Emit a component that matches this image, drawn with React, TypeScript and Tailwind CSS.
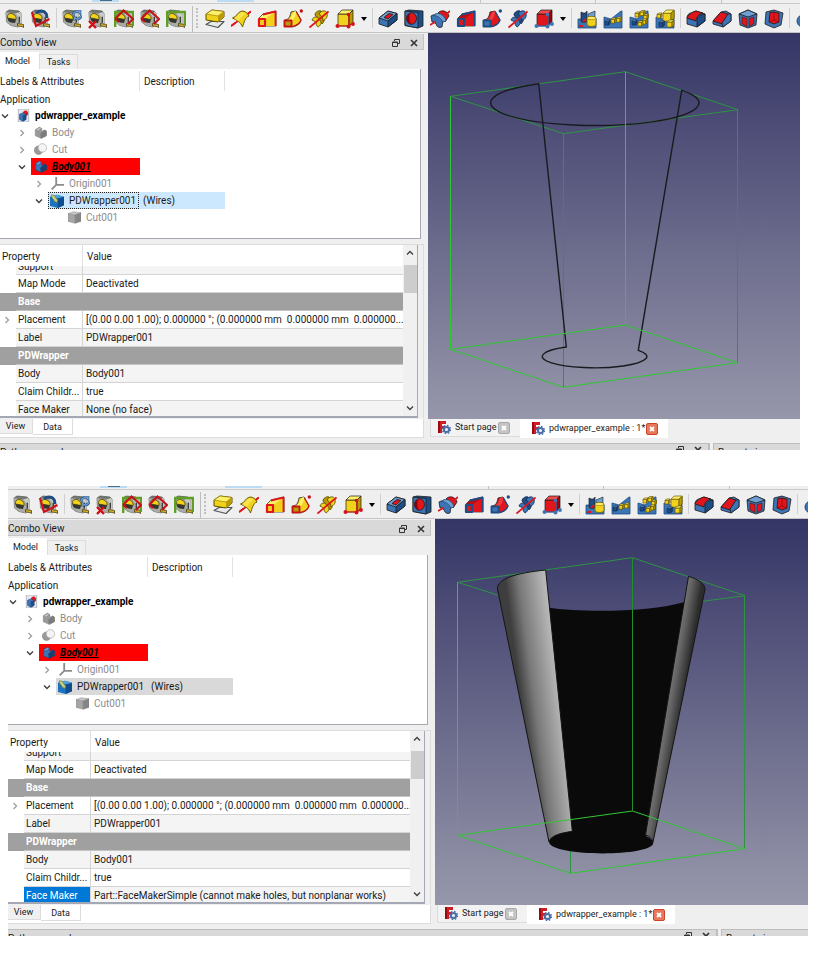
import type { ReactNode } from "react";

const INK = "#1c1c1c";
const YELLOW = "#f0d21c";
const YELLOW_LIGHT = "#fff06a";
const YELLOW_DARK = "#b99a00";
const RED = "#e0161c";
const RED_DARK = "#a40008";
const BLUE = "#3d74b4";
const BLUE_LIGHT = "#6f9fd0";
const BLUE_DARK = "#1e4c85";

function Glyph({ children, size = "size-5" }: { children: ReactNode; size?: string }) {
  return (
    <svg viewBox="0 0 20 20" className={`${size} shrink-0`} aria-hidden="true">
      {children}
    </svg>
  );
}

function Tape() {
  return (
    <g strokeLinejoin="round">
      <path d="M1 3 4 1l10 1 2 2.500v10L13 18l-7-1.500L1.500 13z" fill="#767973" stroke="#50534d" strokeWidth="0.7" />
      <path d="M1 3l9 1.500L12.500 7l.5 11-7-1.500L1.500 13z" fill="#a9aca6" />
      <path d="M10 4.500l5-1.500 1 2v9.500L13 18l-.5-11z" fill="#c9ccc6" />
      <path d="M2.500 9C2 5 5 3.500 8 5c2.500 1 3.500 3.500 3 5.500z" fill={YELLOW} stroke="#4a3f08" strokeWidth="0.8" />
      <path d="M2.500 9l8.500 1.500-1 3.500-4-.5C3.500 12.500 2.500 11 2.500 9z" fill="#33352f" />
      <path d="M13.500 8l1.500-.6v6l-1.500 1z" fill="#3d403a" />
      <path d="M12.500 14.500l6 1v3l-1.500-1-4.500-.5z" fill="#d8b62a" stroke="#4b3d10" strokeWidth="0.8" />
    </g>
  );
}

const frame = <path d="M1.200 18V3h17.600v14" fill="none" stroke="#5f9f28" strokeWidth="2.400" />;
const diamond = <path d="M1 10 9.500 1.500 19 10l-5 5M1 10l4 3" fill="none" stroke="#c81018" strokeWidth="2" />;

const measureBasics: Record<string, ReactNode> = {
  "Measure linear": <Tape />,
  "Measure angular": (
    <>
      <Tape />
      <path d="M5 4c5-4 11-2 11 5" fill="none" stroke={BLUE_DARK} strokeWidth="2.800" />
      <path d="M1 3l4 14L18.500 10" fill="none" stroke="#d01018" strokeWidth="2.200" />
    </>
  ),
};

const measureActions: Record<string, ReactNode> = {
  "Refresh measurements": (
    <>
      <Tape />
      <path d="M11 6c1-4 5-4.500 7-2V1M19.500 6c-1 4.500-5 5-7 2.500v3" fill="none" stroke={BLUE_DARK} strokeWidth="2.600" />
      <path d="M11 6c1-4 5-4.500 7-2V1M19.500 6c-1 4.500-5 5-7 2.500v3" fill="none" stroke={BLUE_LIGHT} strokeWidth="1.400" />
    </>
  ),
  "Clear measurements": (
    <>
      <Tape />
      <path d="M1 12l7 7M8 12l-7 7" fill="none" stroke="#d40c14" strokeWidth="2.400" />
    </>
  ),
  "Toggle all measurements": (
    <>
      <Tape />
      {frame}
      {diamond}
    </>
  ),
  "Toggle 3D measurements": (
    <>
      <Tape />
      {diamond}
    </>
  ),
  "Toggle delta measurements": (
    <>
      <Tape />
      {frame}
    </>
  ),
};

type Box = { x: number; y: number; w: number; h: number; d: number; top: string; front: string; side: string; line?: string };

function Block({ x, y, w, h, d, top, front, side, line = INK }: Box) {
  return (
    <g stroke={line} strokeWidth="0.700" strokeLinejoin="round">
      <path d={`M${x} ${y + d}h${w}v${h}h${-w}z`} fill={front} />
      <path d={`M${x} ${y + d}l${d} ${-d}h${w}l${-d} ${d}z`} fill={top} />
      <path d={`M${x + w} ${y + d}l${d} ${-d}v${h}l${-d} ${d}z`} fill={side} />
    </g>
  );
}

function Cubelet({ x, y, s, blue }: { x: number; y: number; s: number; blue?: boolean }) {
  return (
    <Block
      x={x}
      y={y}
      w={s}
      h={s}
      d={s * 0.4}
      top={blue ? BLUE_LIGHT : YELLOW_LIGHT}
      front={blue ? BLUE_DARK : YELLOW}
      side={blue ? BLUE_DARK : YELLOW_DARK}
      line={blue ? "#12305a" : "#6b5a00"}
    />
  );
}

const revolution = (
  <g strokeLinejoin="round">
    <path d="M0 17 20 2.500" stroke={RED} strokeWidth="1.800" />
    <path d="M1.500 9C6 8 6 3 11 2c3 0 6 2 7 5-4 1-5 7-6.500 11-2-5-6-7-10-9z" fill={YELLOW} stroke="#6b5a00" strokeWidth="1" />
    <path d="M3 9c4-1 4-5 8-6l4 2c-4 1-5 5-8 7z" fill={YELLOW_LIGHT} opacity="0.6" />
    <path d="M0 17l4.500-3.300M16.500 5 20 2.500" stroke={RED} strokeWidth="1.800" />
  </g>
);

const groove = (
  <g strokeLinejoin="round">
    <path d="M8 4c3-4 10-2 11 3l-4 6c-1-4-4-7-7-9z" fill={RED} stroke={INK} strokeWidth="0.800" />
    <path d="M1 7c4-3 10 0 12 5l-1 6c-3 1-4 0-5-1-1-3-3-4-5-4z" fill={BLUE} stroke={INK} strokeWidth="0.8" />
    <path d="M5 5c5-2 10 2 11 7l-3 1C11 9 8 7 5 7z" fill={BLUE_LIGHT} stroke={BLUE_DARK} strokeWidth="0.8" />
    <path d="M0 16l6-3.500M15.500 6 20 2" stroke={RED} strokeWidth="1.700" />
  </g>
);

function loft(body: string, light: string, edge: string) {
  return (
    <g strokeLinejoin="round">
      <path d="M2 9 6 5l13-3v15H7z" fill={light} stroke={INK} strokeWidth="0.7" />
      <path d="M8 10 18 3v14H8z" fill={body} />
      <path d="M6 5.500 18.500 2.500V17" fill="none" stroke={edge} strokeWidth="1.800" />
      <path d="M2 10h6v7H2z" fill={body} stroke={edge} strokeWidth="2.200" />
    </g>
  );
}

function sweep(body: string, light: string, dark: string, edge: string) {
  return (
    <g strokeLinejoin="round">
      <path d="M2 11c5-1 5-4 6-8l5-1 5 9c-2 5-5 6-9 7z" fill={body} stroke={INK} strokeWidth="0.8" />
      <path d="M4 11c4-1 5-5 6-8l3-1c0 4-1 8-5 10z" fill={light} />
      <path d="M1.500 11.500h7v6h-7z" fill={dark} stroke={edge} strokeWidth="1.900" />
      <path d="M9 17.500c5-1 8-3 9-6.500l-4.500-8" fill="none" stroke={edge} strokeWidth="1.200" />
      <circle cx="18.300" cy="2" r="1.700" fill={edge} />
    </g>
  );
}

function helix(body: string, light: string, line: string) {
  return (
    <g strokeLinejoin="round" stroke={line} strokeWidth="0.9">
      <path d="M3 11c1-4 7-4 9 0 1 3-1 6-3 7-1-1-2-2-2-4 0-1-2-2-4-3z" fill={light} />
      <path d="M6 6c0-3 4-5 6-4-2 2 0 4 2 6 2 3 1 5-1 7-1-4-5-6-7-9z" fill={body} />
      <path d="M10 5c2-4 7-4 8-1 1 4-1 6-4 8 0-3-1-5-4-7z" fill={light} />
      <path d="M.5 18.500 19.500 2.500" stroke={RED} strokeWidth="1.700" />
    </g>
  );
}

function primitive(top: string, front: string, side: string, edge: string) {
  return (
    <>
      <Block x={3} y={1} w={11} h={12} d={4} top={top} front={front} side={side} />
      <path d="M14 5v12l4-3M14 17H2" fill="none" stroke={edge} strokeWidth="1.200" />
      <g fill={edge}>
        <circle cx="2.500" cy="17" r="2" />
        <circle cx="13.500" cy="17.500" r="2" />
        <circle cx="18" cy="15" r="1.900" />
        <circle cx="13.500" cy="5.500" r="1.800" />
      </g>
    </>
  );
}

const additiveIcons: Record<string, ReactNode> = {
  Pad: (
    <g strokeLinejoin="round">
      <path d="M1 15.500 6 12.500h13l-6 6z" fill="#e9e9e9" stroke="#4c5558" strokeWidth="1.200" />
      <path d="M1 5l6-4L19 2.500V8l-6 5L1 11z" fill={YELLOW} stroke="#5e4f00" strokeWidth="1" />
      <path d="M1 5l6-4L19 2.500 13 7z" fill={YELLOW_LIGHT} stroke="#8a7400" strokeWidth="0.600" />
      <path d="M13 7l6-4.500V8l-6 5z" fill={YELLOW_DARK} />
    </g>
  ),
  Revolution: revolution,
  "Additive loft": loft(YELLOW, YELLOW_LIGHT, RED),
  "Additive pipe": sweep(YELLOW, YELLOW_LIGHT, YELLOW_DARK, "#c4141a"),
  "Additive helix": helix(YELLOW_DARK, YELLOW, "#5e4f00"),
  "Additive primitive": primitive(YELLOW_LIGHT, YELLOW, YELLOW_DARK, "#d2141a"),
};

const subtractiveIcons: Record<string, ReactNode> = {
  Pocket: (
    <g strokeLinejoin="round" stroke={INK} strokeWidth="0.800">
      <path d="M1 9 10 2l9 2.500V11l-9 7-9-3z" fill={BLUE} />
      <path d="M1 9 10 2l9 2.500-9 7.500z" fill={BLUE_LIGHT} />
      <path d="M10 12l9-7.500V11l-9 7z" fill={BLUE_DARK} />
      <path d="M6 8.500 11 4.500l4 1L10 10z" fill={RED} />
    </g>
  ),
  Hole: (
    <g strokeLinejoin="round" stroke={INK} strokeWidth="0.800">
      <path d="M1 2l4-1 14 1v15l-5 2L1 16.500z" fill={BLUE_DARK} />
      <path d="M1 2l13 1.500V19L1 16.500z" fill={BLUE} />
      <ellipse cx="7.500" cy="9.500" rx="5" ry="5.800" fill={RED} />
      <path d="M6 4.200c-5 2-4 10 1 11-2-3-2-8-1-11z" fill="#8a0008" strokeWidth="0" />
    </g>
  ),
  Groove: groove,
  "Subtractive loft": loft(RED, "#b80e16", BLUE_DARK),
  "Subtractive pipe": sweep(RED, "#f03c3c", BLUE, BLUE_DARK),
  "Subtractive helix": helix(BLUE_DARK, BLUE, "#12305a"),
  "Subtractive primitive": primitive("#f04a4a", RED, RED_DARK, BLUE),
};

const terrain = <path d="M1 8l7 2 10-8h1v17H1z" fill={BLUE} stroke={BLUE_DARK} strokeWidth="0.800" />;

const patternIcons: Record<string, ReactNode> = {
  Mirrored: (
    <>
      <path d="M1 10h18v9H1z" fill={BLUE} stroke={BLUE_DARK} strokeWidth="0.800" />
      <path d="M4 3c3 2 5 1 6-1v10c-2 2-5 2-6 0z" fill={BLUE_DARK} stroke={INK} strokeWidth="0.700" />
      <path d="M11 5l7-3v7h-7z" fill={BLUE_LIGHT} stroke={INK} strokeWidth="0.600" />
      <path d="M10 9c3-2 7-2 9 0v7c-2 2-7 2-9 0z" fill={YELLOW} stroke="#6b5a00" strokeWidth="0.800" />
      <ellipse cx="14.500" cy="9" rx="4.500" ry="1.600" fill={YELLOW_LIGHT} stroke="#6b5a00" strokeWidth="0.500" />
      <path d="M2 17h4M6 13l3-3" stroke={RED} strokeWidth="1.800" />
    </>
  ),
  "Linear pattern": (
    <>
      {terrain}
      <Cubelet x={2} y={11} s={3.6} blue />
      <Cubelet x={8} y={9} s={3.6} />
      <Cubelet x={13.5} y={8} s={3.6} />
    </>
  ),
  "Polar pattern": (
    <>
      {terrain}
      <Cubelet x={6} y={3} s={3.6} />
      <Cubelet x={11} y={1.5} s={3.6} />
      <Cubelet x={14.5} y={5} s={3.6} />
      <Cubelet x={13} y={10} s={3.6} />
      <Cubelet x={9} y={12} s={3.6} />
      <Cubelet x={3} y={11} s={3.6} blue />
    </>
  ),
  MultiTransform: (
    <>
      {terrain}
      <Cubelet x={8} y={1} s={8} />
      <Cubelet x={2} y={4} s={3.6} />
      <Cubelet x={12} y={11} s={5} />
      <Cubelet x={4} y={12} s={4} blue />
    </>
  ),
};

const dressUpIcons: Record<string, ReactNode> = {
  Fillet: (
    <g strokeLinejoin="round" stroke={INK} strokeWidth="0.800">
      <path d="M1 9c0-3 2-5 4-5l5-2 9 3v7l-8 6-10-3z" fill={BLUE} />
      <path d="M1 9c1-3 5-6 9-7l7 2c-4 1-7 4-7 8z" fill={RED} />
      <path d="M11 18v-6c0-4 4-7 8-7v7z" fill={BLUE_DARK} />
    </g>
  ),
  Chamfer: (
    <g strokeLinejoin="round" stroke={INK} strokeWidth="0.800">
      <path d="M1 12 9 3l5-1 5 3v7l-8 6-10-3z" fill={BLUE} />
      <path d="M1 12 9 3l7 2-6 10z" fill={RED} />
      <path d="M11 18l-1-4 6-9h3v7z" fill={BLUE} />
    </g>
  ),
  Draft: (
    <g strokeLinejoin="round" stroke={INK} strokeWidth="0.800">
      <path d="M1 5l9-4 9 4-1 11-8 3-8-3z" fill={BLUE} />
      <path d="M1 5l9-4 9 4-9 3z" fill={BLUE_LIGHT} />
      <path d="M4 8l5 1.500v8L4 15z" fill={RED} strokeWidth="0.500" />
      <path d="M16 8l-5 1.500v8l5-2.500z" fill={RED} strokeWidth="0.500" />
    </g>
  ),
  Thickness: (
    <g strokeLinejoin="round" stroke={INK} strokeWidth="0.800">
      <path d="M2 3l8-2 9 3-2 12-7 3-9-4z" fill={BLUE} />
      <path d="M6 3l9 1v9l-5 2-5-2z" fill={RED} />
      <path d="M10 2v9l-5 2M10 11l5 2" fill="none" stroke={RED_DARK} />
    </g>
  ),
};

function ToolGroup({ icons }: { icons: Record<string, ReactNode> }) {
  return (
    <>
      {Object.entries(icons).map(([name, art]) => (
        <button key={name} type="button" aria-label={name} className="flex w-[26px] shrink-0 items-center justify-center">
          <Glyph>{art}</Glyph>
        </button>
      ))}
    </>
  );
}

function Divider() {
  return <span className="mx-[2px] mb-1 mt-[2px] w-px shrink-0 self-stretch bg-[#cfcfcf]" />;
}

function DropArrow({ label }: { label: string }) {
  return (
    <button type="button" aria-label={label} className="flex w-3 shrink-0 items-center justify-center">
      <svg viewBox="0 0 6 4" className="h-1 w-[6px]" aria-hidden="true">
        <path d="M0 0h6L3 4z" fill="#000" />
      </svg>
    </button>
  );
}

function Toolbar() {
  return (
    <>
      <div className="flex h-1 overflow-hidden border-b border-[#c9c9c9] bg-[#efefef]">
        <span className="ml-[92px] flex h-[2px] w-[27px] justify-center bg-[#bcdcf4]">
          <span className="h-px w-3 bg-[#4c6c84]" />
        </span>
        <span className="ml-[98px] h-[2px] w-[37px] bg-[#bcdcf4]" />
        <span className="ml-[226px] w-px bg-[#c4c4c4]" />
        <span className="ml-[114px] w-px bg-[#c4c4c4]" />
        <span className="ml-[125px] w-px bg-[#c4c4c4]" />
      </div>
      <div
        role="toolbar"
        aria-label="Part Design"
        className="flex h-[29px] items-stretch overflow-hidden border-b border-[#c4c4c4] bg-[#efefef] pl-[2px] pt-[2px]"
      >
        <ToolGroup icons={measureBasics} />
        <Divider />
        <ToolGroup icons={measureActions} />
        <span className="ml-[3px] w-px shrink-0 bg-[#bdbdbd]" />
        <span className="mb-1 ml-[3px] mr-1 mt-[2px] w-0 shrink-0 border-l-2 border-dotted border-[#c0c0c0]" />
        <ToolGroup icons={additiveIcons} />
        <DropArrow label="More additive primitives" />
        <Divider />
        <ToolGroup icons={subtractiveIcons} />
        <DropArrow label="More subtractive primitives" />
        <Divider />
        <ToolGroup icons={patternIcons} />
        <Divider />
        <ToolGroup icons={dressUpIcons} />
        <Divider />
        <button type="button" aria-label="Boolean operation" className="ml-1 flex shrink-0 items-center">
          <Glyph>
            <circle cx="7" cy="12" r="6" fill={BLUE} stroke={BLUE_DARK} />
            <circle cx="13" cy="8" r="6" fill={BLUE_LIGHT} stroke={BLUE_DARK} />
          </Glyph>
        </button>
      </div>
    </>
  );
}

function Chevron({ open, dim }: { open?: boolean; dim?: boolean }) {
  return (
    <svg viewBox="0 0 10 10" className="size-[10px] shrink-0" aria-hidden="true">
      <path
        d={open ? "M2 3.500l3 3 3-3" : "M3.500 2l3 3-3 3"}
        fill="none"
        stroke={dim ? "#a0a0a0" : "#404040"}
        strokeWidth="1.400"
      />
    </svg>
  );
}

const bodyShape = (a: string, b: string, c: string) => (
  <g strokeLinejoin="round" stroke={c} strokeWidth="0.800">
    <path d="M2 6l6-4 4 2v4l5-2 2 2v7l-8 4-9-4z" fill={a} />
    <path d="M2 6l6-4 4 2-6 4z" fill={b} />
    <path d="M10 12l7-6 2 2v7l-8 4z" fill={c} />
  </g>
);

const treeIcons = {
  document: (
    <>
      <path d="M2 0h16v20H2z" fill="#e4e8ee" stroke="#9aa0a8" />
      <path d="M9 5c4-5 9-2 8 4l-4 3z" fill={RED} />
      <path d="M4 8l5-2 5 2v8l-5 3-5-3z" fill={BLUE} stroke={BLUE_DARK} />
      <path d="M9 10l5-2v8l-5 3z" fill={BLUE_DARK} />
    </>
  ),
  bodyGray: bodyShape("#9a9a9a", "#c0c0c0", "#7c7c7c"),
  bodyBlue: bodyShape(BLUE, BLUE_LIGHT, "#183f70"),
  cut: (
    <>
      <circle cx="7" cy="11" r="6.500" fill="#9a9a9a" stroke="#888" />
      <circle cx="13" cy="7.500" r="6.500" fill="#f4f4f4" stroke="#a8a8a8" />
    </>
  ),
  origin: <path d="M8 0v12h12M8 12l-7 7" fill="none" stroke="#8c8c8c" strokeWidth="2.800" />,
  wrapper: (
    <>
      <path d="M0 4l10-3 10 3v12l-9 4-11-3z" fill="#1d72c0" />
      <path d="M11 6l9-2v12l-9 4z" fill="#0e4d90" />
      <path d="M0 4l10-3 10 3-9 2z" fill="#4fa0dc" />
      <path d="M2 1l4 1 5 7-1 3-3-1-5-7z" fill="#c8d078" stroke="#5d6a2c" strokeWidth="0.800" />
    </>
  ),
  box: (
    <g stroke="#808080" strokeWidth="0.600">
      <path d="M0 4l11 2v13L0 16z" fill="#a6a6a6" />
      <path d="M0 4l8-3 12 1.500L11 6z" fill="#c6c6c6" />
      <path d="M11 6l9-3.500V16l-9 3z" fill="#858585" />
    </g>
  ),
};

type Look = "root" | "dim" | "body" | "selected";
type TreeRow = { label: string; icon: keyof typeof treeIcons; level: number; open?: boolean; leaf?: boolean; look: Look };

const rows: TreeRow[] = [
  { label: "pdwrapper_example", icon: "document", level: 1, open: true, look: "root" },
  { label: "Body", icon: "bodyGray", level: 2, look: "dim" },
  { label: "Cut", icon: "cut", level: 2, look: "dim" },
  { label: "Body001", icon: "bodyBlue", level: 2, open: true, look: "body" },
  { label: "Origin001", icon: "origin", level: 3, look: "dim" },
  { label: "PDWrapper001", icon: "wrapper", level: 3, open: true, look: "selected" },
  { label: "Cut001", icon: "box", level: 4, leaf: true, look: "dim" },
];

const indents = ["", "pl-0", "pl-[17px]", "pl-[34px]", "pl-[51px]"];

function Tree({ focused }: { focused: boolean }) {
  return (
    <div className="h-[170px] border-b border-r border-[#a8a8b0] bg-white pt-[2px]">
      <div className="flex h-5 items-center">
        <span className="flex h-full w-[140px] items-center border-r border-[#e2e2e2]">Labels &amp; Attributes</span>
        <span className="flex h-full w-[85px] items-center border-r border-[#e2e2e2] pl-1">Description</span>
      </div>
      <div className="flex h-4 items-center">Application</div>
      <div role="tree" aria-label="Application">
        {rows.map((row) => (
          <div
            key={row.label}
            role="treeitem"
            aria-level={row.level}
            aria-expanded={row.leaf ? undefined : !!row.open}
            aria-selected={row.look === "selected"}
            className={`flex h-[17px] items-center ${indents[row.level]}`}
          >
            <span className="flex w-[14px] shrink-0 items-center">{!row.leaf && <Chevron open={row.open} dim={!row.open} />}</span>
            {row.look === "selected" ? (
              <span className={`flex h-full w-[177px] items-center ${focused ? "bg-[#cce8ff]" : "bg-[#d9d9d9]"}`}>
                <span
                  className={`flex h-full w-[91px] items-center gap-[5px] border pl-px ${focused ? "border-dotted border-[#222]" : "border-transparent"}`}
                >
                  <Glyph size="size-[14px]">{treeIcons[row.icon]}</Glyph>
                  {row.label}
                </span>
                <span className="pl-1">(Wires)</span>
              </span>
            ) : (
              <span
                className={`flex h-full items-center gap-[5px] pl-[3px] ${
                  row.look === "body" ? "w-[109px] bg-[#ff0000] font-bold italic" : row.look === "root" ? "font-bold text-black" : "text-[#8c8c8c]"
                }`}
              >
                <Glyph size="size-[13px]">{treeIcons[row.icon]}</Glyph>
                <span className={row.look === "body" ? "text-black underline overline" : ""}>{row.label}</span>
              </span>
            )}
          </div>
        ))}
      </div>
    </div>
  );
}

type Property = { group: string } | { name: string; value: string; nested?: boolean; tint?: boolean };

function PropertyTable({ faceMaker, picked }: { faceMaker: string; picked: boolean }) {
  const properties: Property[] = [
    { name: "Map Mode", value: "Deactivated" },
    { group: "Base" },
    { name: "Placement", value: "[(0.00 0.00 1.00); 0.000000 °; (0.000000 mm\u00a0 0.000000 mm\u00a0 0.000000...", nested: true },
    { name: "Label", value: "PDWrapper001", tint: true },
    { group: "PDWrapper" },
    { name: "Body", value: "Body001", tint: true },
    { name: "Claim Childr...", value: "true" },
    { name: "Face Maker", value: faceMaker, tint: true },
  ];
  return (
    <div className="flex h-[173px] overflow-hidden border-b-2 border-r border-[#a4a8b4] bg-white">
      <div className="min-w-0 flex-1">
        <table className="w-full table-fixed border-separate border-spacing-0 text-left">
          <colgroup>
            <col className="w-4" />
            <col className="w-[67px]" />
            <col />
          </colgroup>
          <thead>
            <tr>
              <th colSpan={2} className="h-[21px] border-r border-[#e2e2e2] pl-[2px] pt-[2px] font-normal">
                Property
              </th>
              <th className="pl-1 pt-[2px] font-normal">Value</th>
            </tr>
          </thead>
          <tbody>
            <tr>
              <td />
              <td className="border-b border-r border-[#d4d4d4] bg-[#f4f4f4] pl-[2px]">
                <div className="flex h-2 items-end overflow-hidden leading-[14px]">Support</div>
              </td>
              <td className="border-b border-[#d4d4d4] bg-[#f4f4f4]" />
            </tr>
            {properties.map((p) =>
              "group" in p ? (
                <tr key={p.group} className="bg-[#a0a0a0] text-white">
                  <td />
                  <th colSpan={2} scope="rowgroup" className="h-[18px] border-b border-[#c4c4c4] pl-[2px] font-bold leading-[17px]">
                    {p.group}
                  </th>
                </tr>
              ) : (
                <tr key={p.name} className="leading-[17px]">
                  <td className="pl-[2px]">{p.nested && <Chevron dim />}</td>
                  <th
                    scope="row"
                    className={`h-[18px] whitespace-nowrap border-b border-r border-[#d4d4d4] pl-[2px] font-normal ${
                      picked && p.name === "Face Maker" ? "bg-[#0078d7] text-white" : p.tint ? "bg-[#f4f4f4]" : ""
                    }`}
                  >
                    {p.name}
                  </th>
                  <td className={`whitespace-nowrap border-b border-[#d4d4d4] pl-[3px] ${p.tint ? "bg-[#f4f4f4]" : ""}`}>{p.value}</td>
                </tr>
              ),
            )}
          </tbody>
        </table>
      </div>
      <div className="flex w-[14px] shrink-0 flex-col items-center bg-[#f0f0f0] py-[3px]">
        <button type="button" aria-label="Scroll up" className="rotate-180">
          <Chevron open />
        </button>
        <span className="mt-[7px] h-7 w-[13px] bg-[#cdcdcd]" />
        <button type="button" aria-label="Scroll down" className="mt-auto">
          <Chevron open />
        </button>
      </div>
    </div>
  );
}

function DockButtons() {
  return (
    <span className="flex items-center gap-[10px]">
      <button type="button" aria-label="Float panel">
        <svg viewBox="0 0 8 8" className="size-2" fill="none" stroke="#333" aria-hidden="true">
          <path d="M2.500 2V.5h5v4H6M.5 3h5v4.500h-5zM.5 3.500h5" />
        </svg>
      </button>
      <button type="button" aria-label="Close panel">
        <svg viewBox="0 0 8 8" className="size-2" fill="none" stroke="#333" strokeWidth="1.600" aria-hidden="true">
          <path d="M1 1l6 6M7 1 1 7" />
        </svg>
      </button>
    </span>
  );
}

function ComboView({ faceMaker, focused }: { faceMaker: string; focused: boolean }) {
  return (
    <section aria-label="Combo View" className="pt-px">
      <div className="mr-1 flex h-4 items-center justify-between border-b border-r border-[#c4c4c4] bg-[#d9d9d9] pr-[5px] pt-[2px]">
        Combo View
        <DockButtons />
      </div>
      <div role="tablist" className="flex h-[19px] items-end text-[9px] leading-[14px]">
        <button type="button" role="tab" aria-selected="true" className="h-[17px] w-[39px] bg-white pr-1">
          Model
        </button>
        <button type="button" role="tab" aria-selected="false" className="h-[15px] w-[39px] border border-b-0 border-[#dcdcdc] bg-[#f0f0f0]">
          Tasks
        </button>
      </div>
      <div className="pr-[7px]">
        <Tree focused={focused} />
      </div>
      <div className="mr-1 mt-[5px] border-r border-t border-[#dcdcdc] pr-[5px]">
        <PropertyTable faceMaker={faceMaker} picked={!focused} />
      </div>
      <div
        role="tablist"
        className="mr-1 mt-px flex h-[19px] items-start border-b border-r border-[#dcdcdc] bg-white text-[9px] leading-[14px]"
      >
        <button type="button" role="tab" aria-selected="false" className="h-[15px] w-[33px] border-b border-r border-[#dcdcdc] bg-[#f0f0f0] pr-px">
          View
        </button>
        <button type="button" role="tab" aria-selected="true" className="h-4 w-10 border-b border-r border-[#dcdcdc] bg-white">
          Data
        </button>
      </div>
    </section>
  );
}

const GREEN = "#30c832";
const GREEN_DIM = "#2d9442";

function Scene({ solid }: { solid: boolean }) {
  return (
    <svg
      viewBox="0 0 372 386"
      preserveAspectRatio="xMinYMax meet"
      className="block h-[386px] w-full bg-[#353566]"
      role="img"
      aria-label="3D view"
    >
      <defs>
        <linearGradient id="sky" x1="0" y1="0" x2="0" y2="1">
          <stop offset="0" stopColor="#353566" />
          <stop offset="1" stopColor="#9797ab" />
        </linearGradient>
        <linearGradient id="leftShell" gradientUnits="userSpaceOnUse" x1="88" y1="197" x2="126" y2="192">
          <stop offset="0" stopColor="#3e3e3e" />
          <stop offset="0.35" stopColor="#787878" />
          <stop offset="1" stopColor="#b6b6b6" />
        </linearGradient>
        <linearGradient id="rightShell" gradientUnits="userSpaceOnUse" x1="228" y1="190" x2="246" y2="193">
          <stop offset="0" stopColor="#7e7e7e" />
          <stop offset="0.4" stopColor="#646464" />
          <stop offset="1" stopColor="#2c2c2c" />
        </linearGradient>
      </defs>
      <rect width="1200" height="386" fill="url(#sky)" />
      <g fill="none" stroke={GREEN_DIM} strokeWidth="1">
        {solid ? (
          <path d="M64 76.500 22.700 63.300 197.300 38.700 310 76.700 266 82.500M135.500 330v24" />
        ) : (
          <path d="M22.700 63.300 197.300 38.700 310 76.700 135.500 100.700zM135.500 100.700v253.600" />
        )}
        <path d="M309.500 76.700v253" />
      </g>
      {solid ? (
        <g strokeLinejoin="round">
          <path
            d="M112 88.500C150 94 215 93 250 83L211 317C217 320 218.300 322 218.300 324 217 338 116 338 114 323L120 310z"
            fill="#0a0a0a"
          />
          <path
            d="M62.500 70C62 60 80 54 110.700 51L137.300 312.300C125 314 115 317 114 323z"
            fill="url(#leftShell)"
            stroke="#151515"
            strokeWidth="1"
          />
          <path
            d="M253.500 57.300C264 60.500 270 65 270 70.300L218 323C217 319 214 317 210.500 316z"
            fill="url(#rightShell)"
            stroke="#151515"
            strokeWidth="1"
          />
        </g>
      ) : (
        <path
          d="M253.700 57.300A104.200 22.700 0 1 1 110.700 50.700L138.300 314A52.300 11.300 0 1 0 210.300 317.300z"
          fill="none"
          stroke="#1a1a1e"
          strokeWidth="1.400"
        />
      )}
      <g fill="none" stroke={GREEN} strokeWidth="1">
        <path d="M22.500 63.300v253L197.500 292 309.500 329.700 135.500 354.300 22.500 316.300" />
        <path d="M197.500 38.700V292" stroke={solid ? "#1f8f2a" : GREEN} />
      </g>
    </svg>
  );
}

function DocTab({ title, active }: { title: string; active?: boolean }) {
  return (
    <div
      role="tab"
      aria-selected={!!active}
      className={`flex items-center ${
        active ? "h-[19px] w-[148px] bg-white pl-3" : "h-[18px] w-[90px] border-b border-l border-[#dcdcdc] bg-[#f2f2f2] pl-[7px]"
      }`}
    >
      <svg viewBox="0 0 13 13" className="mr-1 size-[13px] shrink-0" aria-hidden="true">
        <path d="M0 0h8v3H4v2h3v3H4v4H0z" fill="#d01c24" />
        <path d="M0 0h2v12H0z" fill="#960a10" />
        <circle cx="8.500" cy="8.500" r="2.600" fill="#eee" stroke="#4a6ea8" strokeWidth="2" />
        <circle cx="8.500" cy="8.500" r="4" fill="none" stroke="#4a6ea8" strokeWidth="1.400" strokeDasharray="1.600 1.540" />
      </svg>
      <span className={`whitespace-nowrap ${active ? "w-[97px]" : "w-[43px]"}`}>{title}</span>
      <button type="button" aria-label={`Close ${title}`}>
        <svg viewBox="0 0 12 12" className="size-3" aria-hidden="true">
          <rect
            x="0.500"
            y="0.500"
            width="11"
            height="11"
            rx="1.500"
            fill={active ? "#e8785c" : "#c4c4c4"}
            stroke={active ? "#cc4428" : "#a8a8a8"}
          />
          <path d="M4 4l4 4M8 4 4 8" stroke="#fff" strokeWidth="1.800" />
        </svg>
      </button>
    </div>
  );
}

type WindowProps = { faceMaker: string; solid: boolean; columns: string };

function AppWindow({ faceMaker, solid, columns }: WindowProps) {
  return (
    <article className="overflow-hidden bg-[#efefef]">
      <Toolbar />
      <div className={`grid ${columns}`}>
        <ComboView faceMaker={faceMaker} focused={!solid} />
        <section aria-label="Document" className="min-w-0">
          <Scene solid={solid} />
          <div role="tablist" className="flex h-[19px] items-start pl-[2px] text-[9px]">
            <DocTab title="Start page" />
            <DocTab title="pdwrapper_example : 1*" active />
          </div>
        </section>
      </div>
      <div className="mt-[5px] flex h-[7px] overflow-hidden leading-[14px]">
        <div className="flex h-5 w-[710px] shrink-0 items-start justify-between border-r-2 border-t border-[#bdbdbd] bg-[#d9d9d9] pr-[6px] pt-[2px]">
          Python console
          <DockButtons />
        </div>
        <div className="ml-[3px] h-5 flex-1 border-l border-t border-[#bdbdbd] bg-[#d9d9d9] pl-1 pt-[2px]">Report view</div>
      </div>
    </article>
  );
}

const windows: (WindowProps & { margin: string })[] = [
  { faceMaker: "None (no face)", solid: false, columns: "grid-cols-[428px_1fr]", margin: "mr-7" },
  {
    faceMaker: "Part::FaceMakerSimple (cannot make holes, but nonplanar works)",
    solid: true,
    columns: "grid-cols-[427px_1fr]",
    margin: "ml-2 mr-5",
  },
];

export default function App() {
  return (
    <main className="flex min-h-screen flex-col gap-9 bg-white font-[Roboto,'Open_Sans',sans-serif] text-[10px] text-[#1a1a1a]">
      {windows.map(({ margin, ...rest }) => (
        <div key={rest.faceMaker} className={margin}>
          <AppWindow {...rest} />
        </div>
      ))}
    </main>
  );
}
